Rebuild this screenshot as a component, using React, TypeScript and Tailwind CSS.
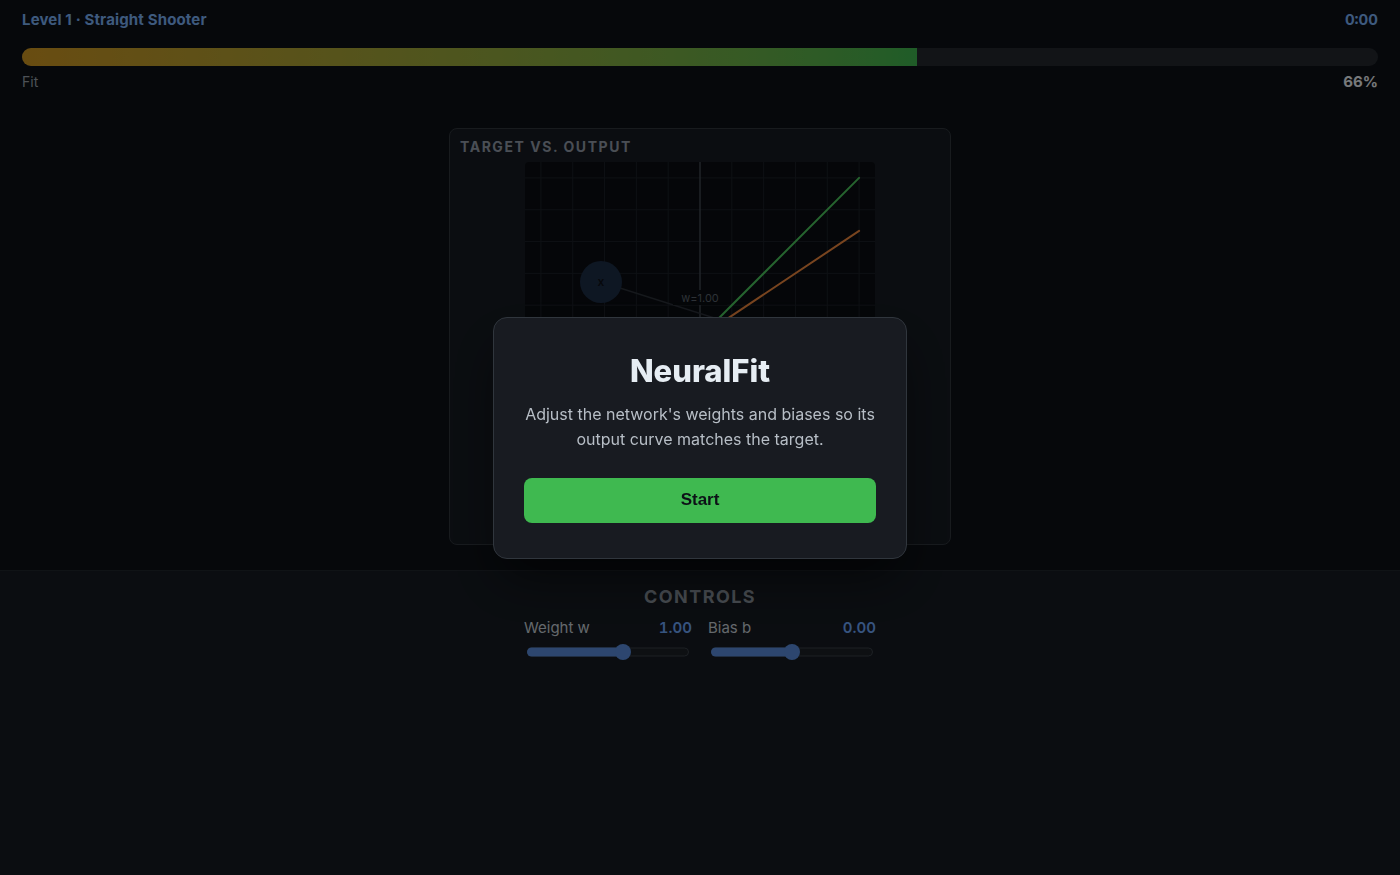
import React from 'react';

const FONT = { fontFamily: 'Inter, "Noto Sans", sans-serif' };

// Chart domain [-5.5, 5.5] on both axes, 350px square.
const SIZE = 350;
const S = SIZE / 11;
const px = (x: number) => SIZE / 2 + x * S;
const py = (y: number) => SIZE / 2 - y * S;

const W = 1.0;
const B = 0.0;

function Chart() {
  const ticks = [-5, -4, -3, -2, -1, 0, 1, 2, 3, 4, 5];
  return (
    <svg width={SIZE} height={SIZE} className="block rounded bg-[#0a0d12]">
      {ticks.map(t => (
        <g key={t}>
          <line x1={px(t)} y1={0} x2={px(t)} y2={SIZE} stroke="#1c2128" strokeWidth={1} />
          <line x1={0} y1={py(t)} x2={SIZE} y2={py(t)} stroke="#1c2128" strokeWidth={1} />
        </g>
      ))}
      <line x1={px(0)} y1={0} x2={px(0)} y2={SIZE} stroke="#555c66" strokeWidth={1} />
      <line x1={0} y1={py(0)} x2={SIZE} y2={py(0)} stroke="#555c66" strokeWidth={1} />

      {/* target */}
      <line x1={px(-5)} y1={py(-5)} x2={px(5)} y2={py(5)} stroke="#4cc95e" strokeWidth={2} strokeLinecap="round" />
      {/* output */}
      <line x1={px(-5)} y1={py(-5 * 0.667)} x2={px(5)} y2={py(5 * 0.667)} stroke="#f0883e" strokeWidth={2} strokeLinecap="round" />

      {/* network sketch */}
      <line x1={76} y1={120} x2={290} y2={188} stroke="#2c3139" strokeWidth={1.5} />
      <circle cx={76} cy={120} r={21} fill="#1d2e47" />
      <text x={76} y={124} textAnchor="middle" fontSize={12} fontWeight={600} fill="#0d1117" style={FONT}>x</text>
      <rect x={148} y={128} width={54} height={15} fill="#0a0d12" />
      <text x={175} y={140} textAnchor="middle" fontSize={11} fill="#5b626c" style={FONT}>w={W.toFixed(2)}</text>
      <circle cx={290} cy={188} r={21} fill="#1d2e47" />
      <text x={290} y={192} textAnchor="middle" fontSize={12} fontWeight={600} fill="#0d1117" style={FONT}>y</text>
    </svg>
  );
}

function Slider({ label, value, min, max }: { label: string; value: number; min: number; max: number }) {
  const pct = (value - min) / (max - min);
  return (
    <div>
      <div className="flex items-center justify-between text-[15px] leading-5">
        <span className="text-[#c9d1d9]">{label}</span>
        <span className="font-semibold text-[#6ea8fe] tabular-nums">{value.toFixed(2)}</span>
      </div>
      <div className="relative mt-[6px] h-4 px-[3px]">
        <div className="absolute left-[3px] right-[3px] top-1/2 h-[9px] -translate-y-1/2 rounded-full border border-[#3a4049] bg-[#1c2026]" />
        <div
          className="absolute left-[3px] top-1/2 h-[9px] -translate-y-1/2 rounded-full bg-[#5a8dde]"
          style={{ width: `calc(8px + ${pct} * (100% - 22px))` }}
        />
        <div
          className="absolute top-1/2 h-4 w-4 -translate-y-1/2 rounded-full bg-[#5a8dde]"
          style={{ left: `calc(3px + ${pct} * (100% - 22px))` }}
        />
      </div>
    </div>
  );
}

export default function App() {
  const fit = 66;
  return (
    <div className="relative flex min-h-screen flex-col bg-[#0d1117]" style={FONT}>
      {/* header */}
      <div className="px-[22px] pt-[10px]">
        <div className="flex items-center justify-between">
          <span className="text-[15px] font-bold leading-5 tracking-[0.01em] text-[#7cb4fb]">Level 1 · Straight Shooter</span>
          <span className="text-[15px] font-bold leading-5 text-[#7cb4fb] tabular-nums">0:00</span>
        </div>
        <div className="mt-[18px] h-[18px] overflow-hidden rounded-full bg-[#24292f]">
          <div
            className="h-full bg-gradient-to-r from-[#d29922] to-[#3fb950]"
            style={{ width: `${fit}%` }}
          />
        </div>
        <div className="mt-[6px] flex items-center justify-between text-[14px] leading-5">
          <span className="text-[#9aa3ad]">Fit</span>
          <span className="text-[15px] font-bold text-[#eef2f6]">{fit}%</span>
        </div>
      </div>

      {/* chart card */}
      <div className="flex justify-center pt-[36px] pb-[25px]">
        <div className="w-[502px] rounded-lg border border-[#30363d] bg-[#161b22] px-[10px] pt-[8px] pb-[10px]">
          <h3 className="text-[14px] font-bold uppercase leading-5 tracking-[0.11em] text-[#949daa]">Target vs. Output</h3>
          <div className="mt-[5px] flex justify-center">
            <Chart />
          </div>
          <div className="mt-1 flex h-[18px] items-center justify-center gap-4 text-xs text-[#8b949e]">
            <span className="flex items-center gap-1.5"><span className="h-0.5 w-4 bg-[#3fb950]" />Target</span>
            <span className="flex items-center gap-1.5"><span className="h-0.5 w-4 bg-[#f0883e]" />Output</span>
          </div>
        </div>
      </div>

      {/* controls */}
      <div className="flex-1 border-t border-[#21262d] bg-[#161b22] pt-[15px]">
        <h3 className="text-center text-[18px] font-bold uppercase leading-[22px] tracking-[0.08em] text-[#8b949e]">Controls</h3>
        <div className="mx-auto mt-[10px] grid w-[352px] grid-cols-2 gap-4">
          <Slider label="Weight w" value={W} min={-5} max={5} />
          <Slider label="Bias b" value={B} min={-5} max={5} />
        </div>
      </div>

      {/* start overlay */}
      <div className="fixed inset-0 flex items-center justify-center bg-black/50">
        <div className="w-[414px] rounded-[14px] border border-[#30363d] bg-[#181b21] px-[30px] pt-8 pb-[35px] text-center shadow-2xl shadow-black/60">
          <h1 className="text-[31px] font-extrabold leading-[42px] text-[#e6edf3]">NeuralFit</h1>
          <p className="mt-[10px] text-[16px] leading-[25px] text-[#b7bec6]">
            Adjust the network's weights and biases so its output curve matches the target.
          </p>
          <button
            type="button"
            className="mt-[26px] h-[45px] w-full rounded-lg bg-[#3fb950] text-[17px] font-bold text-[#0d1117]"
            style={{ fontFamily: '"Liberation Sans", Arial, sans-serif' }}
          >
            Start
          </button>
        </div>
      </div>
    </div>
  );
}
